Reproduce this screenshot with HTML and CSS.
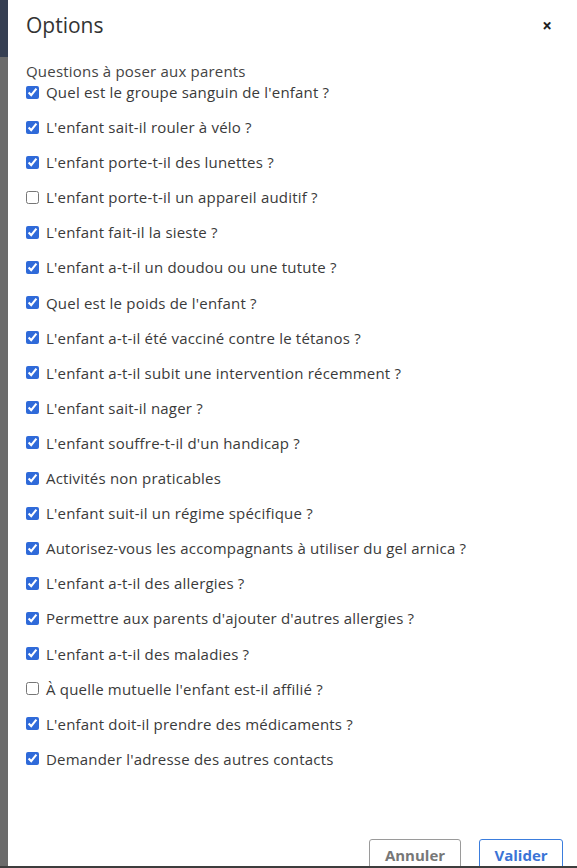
FILE: index.html
```html
<!DOCTYPE html>
<html lang="fr">
<head>
<meta charset="utf-8">
<title>Options</title>
<link rel="stylesheet" href="styles.css">
</head>
<body>
<div class="page">
  <div class="backdrop">
    <div class="backdrop-top"></div>
    <div class="backdrop-rest"></div>
  </div>
  <div class="modal">
    <div class="modal-header">
      <h1 class="modal-title">Options</h1>
      <button class="close" type="button">×</button>
    </div>
    <div class="modal-body">
      <div class="group-label">Questions à poser aux parents</div>
      <ul class="options">
        <li><label><input type="checkbox" checked><span>Quel est le groupe sanguin de l'enfant ?</span></label></li>
        <li><label><input type="checkbox" checked><span>L'enfant sait-il rouler à vélo ?</span></label></li>
        <li><label><input type="checkbox" checked><span>L'enfant porte-t-il des lunettes ?</span></label></li>
        <li><label><input type="checkbox"><span>L'enfant porte-t-il un appareil auditif ?</span></label></li>
        <li><label><input type="checkbox" checked><span>L'enfant fait-il la sieste ?</span></label></li>
        <li><label><input type="checkbox" checked><span>L'enfant a-t-il un doudou ou une tutute ?</span></label></li>
        <li><label><input type="checkbox" checked><span>Quel est le poids de l'enfant ?</span></label></li>
        <li><label><input type="checkbox" checked><span>L'enfant a-t-il été vacciné contre le tétanos ?</span></label></li>
        <li><label><input type="checkbox" checked><span>L'enfant a-t-il subit une intervention récemment ?</span></label></li>
        <li><label><input type="checkbox" checked><span>L'enfant sait-il nager ?</span></label></li>
        <li><label><input type="checkbox" checked><span>L'enfant souffre-t-il d'un handicap ?</span></label></li>
        <li><label><input type="checkbox" checked><span>Activités non praticables</span></label></li>
        <li><label><input type="checkbox" checked><span>L'enfant suit-il un régime spécifique ?</span></label></li>
        <li><label><input type="checkbox" checked><span>Autorisez-vous les accompagnants à utiliser du gel arnica ?</span></label></li>
        <li><label><input type="checkbox" checked><span>L'enfant a-t-il des allergies ?</span></label></li>
        <li><label><input type="checkbox" checked><span>Permettre aux parents d'ajouter d'autres allergies ?</span></label></li>
        <li><label><input type="checkbox" checked><span>L'enfant a-t-il des maladies ?</span></label></li>
        <li><label><input type="checkbox"><span>À quelle mutuelle l'enfant est-il affilié ?</span></label></li>
        <li><label><input type="checkbox" checked><span>L'enfant doit-il prendre des médicaments ?</span></label></li>
        <li><label><input type="checkbox" checked><span>Demander l'adresse des autres contacts</span></label></li>
      </ul>
    </div>
    <div class="modal-footer">
      <button class="btn btn-cancel" type="button">Annuler</button>
      <button class="btn btn-primary" type="button">Valider</button>
    </div>
  </div>
</div>
</body>
</html>
```

FILE: styles.css
```css
* { box-sizing: border-box; }
html, body { margin: 0; padding: 0; }
body {
  width: 577px;
  height: 868px;
  overflow: hidden;
  background: #3d3d3d;
  font-family: "Open Sans", "Noto Sans", sans-serif;
  color: #333;
}
.page {
  display: flex;
  height: 866px;
}
.backdrop {
  width: 8px;
  display: flex;
  flex-direction: column;
}
.backdrop-top { height: 57px; background: #363f52; }
.backdrop-rest { flex: 1; background: #6b6b6b; }
.modal {
  flex: 1;
  background: #fff;
  display: flex;
  flex-direction: column;
  padding: 0 14px 0 18px;
}
.modal-header {
  display: flex;
  justify-content: space-between;
  align-items: center;
  height: 50px;
}
.modal-title {
  margin: 0;
  font-size: 21px;
  font-weight: 400;
  color: #333;
}
.close {
  border: 0;
  background: none;
  padding: 0;
  margin-right: 11px;
  font-family: "Open Sans", sans-serif;
  font-size: 17px;
  font-weight: 700;
  color: #222;
  line-height: 1;
}
.modal-body {
  flex: 1;
  padding-top: 11px;
}
.group-label {
  font-size: 15px;
  letter-spacing: 0.2px;
  line-height: 20px;
  color: #444;
}
.options {
  list-style: none;
  margin: 1px 0 0;
  padding: 0;
  display: flex;
  flex-direction: column;
  gap: 15.1px;
}
.options label {
  display: flex;
  align-items: center;
  height: 20px;
  font-size: 15px;
  letter-spacing: 0.2px;
  color: #3a3a3a;
}
.options input {
  width: 13px;
  height: 13px;
  margin: 0 7px 0 0;
  accent-color: #2f6ad9;
}
.modal-footer {
  display: flex;
  justify-content: flex-end;
  align-items: flex-start;
  gap: 18px;
  height: 27px;
  overflow: hidden;
}
.btn {
  font-family: "Open Sans", sans-serif;
  font-size: 15px;
  font-weight: 700;
  background: #fff;
  border-radius: 3px;
  height: 32px;
  padding: 0 14px;
  margin: 0;
}
.btn-cancel {
  border: 1px solid #9a9a9a;
  color: #777;
  width: 92px;
}
.btn-primary {
  border: 1px solid #3b7ddd;
  color: #3b74d6;
  width: 84px;
}
```
